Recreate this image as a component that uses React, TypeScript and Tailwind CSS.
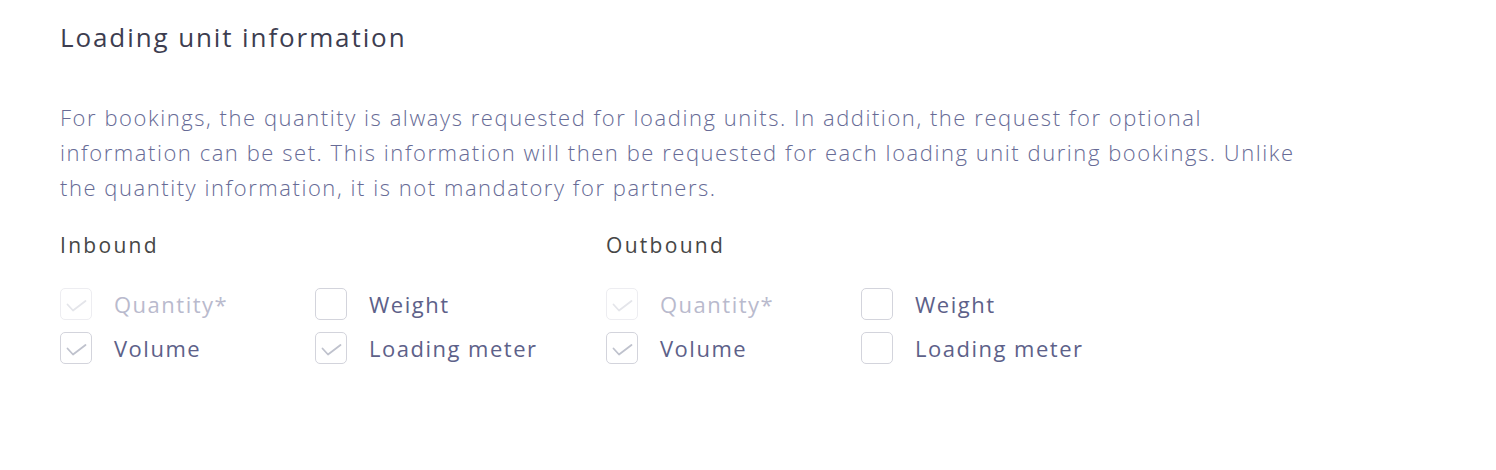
import React from 'react';

type Item = { label: string; checked: boolean; disabled?: boolean };

const Check: React.FC<{ color: string }> = ({ color }) => (
  <svg width="30" height="30" viewBox="0 0 30 30" fill="none">
    <polyline points="6.5,15.5 12,21.5 24.5,12" stroke={color} strokeWidth="1.8" strokeLinecap="round" strokeLinejoin="round" />
  </svg>
);

const CheckItem: React.FC<{ item: Item }> = ({ item }) => (
  <label className="flex items-center w-[255px]">
    <span
      className={`h-8 w-8 rounded-[5px] border flex items-center justify-center flex-shrink-0 ${
        item.disabled ? 'border-[#ededf1]' : 'border-[#d3d4dc]'
      }`}
    >
      {item.checked && <Check color={item.disabled ? '#e4e5ea' : '#bfc2cd'} />}
    </span>
    <span
      className={`ml-[22px] text-[22px] leading-8 tracking-[1.5px] ${
        item.disabled ? 'text-[#b9bacd]' : 'text-[#5d6189]'
      }`}
    >
      {item.label}
    </span>
  </label>
);

const Group: React.FC<{ title: string; items: Item[] }> = ({ title, items }) => (
  <div className="w-[546px]">
    <h3 className="text-[21px] leading-[30px] font-medium tracking-[2.3px] text-[#464646]">{title}</h3>
    <div className="mt-[28px] grid grid-cols-2 gap-y-3 w-[510px]">
      {items.map((item) => (
        <CheckItem key={item.label} item={item} />
      ))}
    </div>
  </div>
);

const App: React.FC = () => {
  const inbound: Item[] = [
    { label: 'Quantity*', checked: true, disabled: true },
    { label: 'Weight', checked: false },
    { label: 'Volume', checked: true },
    { label: 'Loading meter', checked: true },
  ];
  const outbound: Item[] = [
    { label: 'Quantity*', checked: true, disabled: true },
    { label: 'Weight', checked: false },
    { label: 'Volume', checked: true },
    { label: 'Loading meter', checked: false },
  ];

  return (
    <div
      className="w-[1496px] h-[470px] bg-white pl-[60px] pt-[19px]"
      style={{ fontFamily: '"Open Sans", "Liberation Sans", sans-serif' }}
    >
      <h2 className="text-[26px] leading-9 font-medium tracking-[1.9px] text-[#3d3d50]">Loading unit information</h2>

      <p className="mt-[45px] w-[1258px] text-[22px] leading-[35px] font-light tracking-[1.55px] text-[#676b96]">
        For bookings, the quantity is always requested for loading units. In addition, the request for optional
        information can be set. This information will then be requested for each loading unit during bookings. Unlike
        the quantity information, it is not mandatory for partners.
      </p>

      {/* Inbound / Outbound */}
      <div className="mt-[25px] flex">
        <Group title="Inbound" items={inbound} />
        <Group title="Outbound" items={outbound} />
      </div>
    </div>
  );
};

export default App;
